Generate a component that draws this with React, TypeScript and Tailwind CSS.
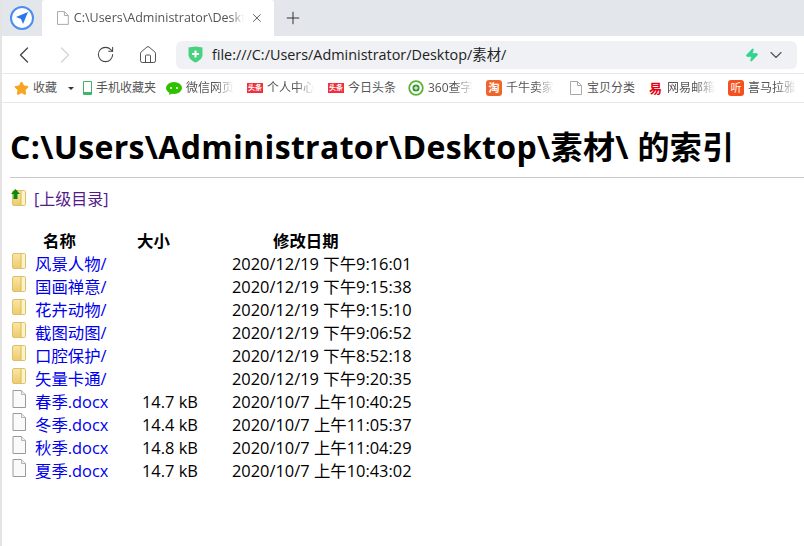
import { ChevronLeft, ChevronRight, RotateCw, Home, Plus, X, ChevronDown, Star, Zap } from 'lucide-react'

const font = "font-['Open_Sans','Noto_Sans_CJK_SC',sans-serif]"

const dirs = [
  { name: '风景人物/', date: '2020/12/19 下午9:16:01' },
  { name: '国画禅意/', date: '2020/12/19 下午9:15:38' },
  { name: '花卉动物/', date: '2020/12/19 下午9:15:10' },
  { name: '截图动图/', date: '2020/12/19 下午9:06:52' },
  { name: '口腔保护/', date: '2020/12/19 下午8:52:18' },
  { name: '矢量卡通/', date: '2020/12/19 下午9:20:35' },
]

const files = [
  { name: '春季.docx', size: '14.7 kB', date: '2020/10/7 上午10:40:25' },
  { name: '冬季.docx', size: '14.4 kB', date: '2020/10/7 上午11:05:37' },
  { name: '秋季.docx', size: '14.8 kB', date: '2020/10/7 上午11:04:29' },
  { name: '夏季.docx', size: '14.7 kB', date: '2020/10/7 上午10:43:02' },
]

function FolderIcon({ className }: { className?: string }) {
  return (
    <svg width="14" height="16" viewBox="0 0 14 16" className={className}>
      <defs>
        <linearGradient id="fold" x1="0" y1="0" x2="0" y2="1">
          <stop offset="0" stopColor="#f9e6a6" />
          <stop offset="1" stopColor="#eecb6c" />
        </linearGradient>
      </defs>
      <rect x="0.5" y="0.5" width="13" height="15" rx="1.5" fill="url(#fold)" stroke="#dcc06e" />
      <rect x="9" y="1" width="4" height="14" fill="#fdf3c8" />
      <path d="M9 1v14" stroke="#d9b95c" />
    </svg>
  )
}

function FileIcon({ className }: { className?: string }) {
  return (
    <svg width="14" height="18" viewBox="0 0 14 18" className={className}>
      <path d="M1 .5h8.500l4 4v13H1z" fill="#fafafa" stroke="#9a9a9a" />
      <path d="M9.500.5v4h4" fill="#eee" stroke="#b5b5b5" />
    </svg>
  )
}

function PageIcon({ className }: { className?: string }) {
  return (
    <svg width="12" height="14" viewBox="0 0 12 14" className={className}>
      <path d="M.5.5h7l4 4v9H.5z" fill="#fff" stroke="#a9a9a9" />
      <path d="M7.500.5v4h4" fill="none" stroke="#a9a9a9" />
    </svg>
  )
}

function Toutiao() {
  return (
    <span className="w-4 h-[10px] bg-[#f0303c] text-white text-[7px] leading-[10px] text-center font-bold shrink-0">
      头条
    </span>
  )
}

function Bookmark({ icon, label, width, fade }: { icon: React.ReactNode; label: string; width: string; fade?: boolean }) {
  return (
    <div className={`flex items-center gap-1 shrink-0 ${width}`}>
      {icon}
      <span
        className={`text-[12px] text-[#555] whitespace-nowrap ${
          fade ? '[mask-image:linear-gradient(to_right,black_60%,transparent)]' : ''
        }`}
      >
        {label}
      </span>
    </div>
  )
}

export default function App() {
  return (
    <div className={`h-[546px] w-[804px] overflow-hidden bg-white border-l-2 border-[#e4e4e4] text-black ${font}`}>
      {/* Tab strip */}
      <div className="h-9 bg-[#e3e6eb] flex items-end">
        <div className="w-10 h-9 flex items-center justify-center">
          <div className="w-6 h-6 rounded-full border-2 border-[#4c8df0] bg-white flex items-center justify-center">
            <svg width="14" height="14" viewBox="0 0 14 14">
              <path d="M13 1 1 6l5 2 2 5z" fill="#2a78e8" />
            </svg>
          </div>
        </div>
        <div className="w-[232px] h-9 bg-white rounded-t-[3px] flex items-center pl-[15px] pr-[10px]">
          <PageIcon />
          <span className="ml-[5px] w-[173px] whitespace-nowrap text-[12.5px] text-[#555] [mask-image:linear-gradient(to_right,black_92%,transparent)] overflow-hidden">
            C:\Users\Administrator\Desktop\素材\
          </span>
          <X className="ml-[6px] w-[14px] h-[14px] text-[#444]" strokeWidth={1.5} />
        </div>
        <div className="h-9 flex items-center ml-[9px]">
          <Plus className="w-5 h-5 text-[#333]" strokeWidth={1.2} />
        </div>
      </div>

      {/* Toolbar */}
      <div className="h-[38px] flex items-center border-b border-[#e8e8e8]">
        <ChevronLeft className="ml-2 w-7 h-7 text-[#444]" strokeWidth={1.1} />
        <ChevronRight className="ml-[13px] w-7 h-7 text-[#d4d4d4]" strokeWidth={1.1} />
        <RotateCw className="ml-[17px] w-[19px] h-[19px] text-[#444]" strokeWidth={1.3} />
        <Home className="ml-[23px] w-[20px] h-[20px] text-[#444]" strokeWidth={1.1} />
        <div className="ml-[18px] w-[621px] h-7 rounded-md bg-[#eff1f4] flex items-center pl-3 pr-[11px]">
          <svg width="15" height="17" viewBox="0 0 15 17">
            <path d="M.5 1.500 7.500.5l7 1v7c0 4-3.500 6.500-7 8-3.500-1.500-7-4-7-8z" fill="#48d17e" />
            <path d="M7.500 4.500v7M4 8h7" stroke="#fff" strokeWidth="2" />
          </svg>
          <span className="ml-[9px] text-[14.4px] text-[#222] flex-1">file:///C:/Users/Administrator/Desktop/素材/</span>
          <Zap className="mr-[-1px] w-[14px] h-[14px] text-[#2fd58a]" fill="#2fd58a" />
          <ChevronDown className="ml-[8px] w-5 h-5 text-[#555]" strokeWidth={1.4} />
        </div>
      </div>

      {/* Bookmarks */}
      <div className="h-[29px] flex items-center border-b border-[#e8e8e8] pl-[12px]">
        <Star className="w-[15px] h-[15px] text-[#f6a623] shrink-0" fill="#f6a623" />
        <span className="ml-1 w-[34px] text-[12px] text-[#555] whitespace-nowrap">收藏</span>
        <span className="ml-[1px] w-0 h-0 border-x-[3px] border-x-transparent border-t-[3px] border-t-[#333]" />
        <div className="ml-[9px] flex items-center">
          <Bookmark
            width="w-[83px]"
            label="手机收藏夹"
            icon={<span className="w-[9px] h-[14px] rounded-[1px] border-[1.5px] border-[#3fb56c] border-b-[3px] shrink-0" />}
          />
          <Bookmark
            width="w-[81px]"
            label="微信网页"
            fade
            icon={
              <svg width="16" height="13" viewBox="0 0 16 13" className="shrink-0">
                <ellipse cx="8" cy="6" rx="8" ry="6" fill="#2dc100" />
                <path d="m4 9-1 4 4-2z" fill="#2dc100" />
                <circle cx="5" cy="6" r="1" fill="#fff" />
                <circle cx="11" cy="6" r="1" fill="#fff" />
              </svg>
            }
          />
          <Bookmark width="w-[81px]" label="个人中心" fade icon={<Toutiao />} />
          <Bookmark width="w-[80px]" label="今日头条" icon={<Toutiao />} />
          <Bookmark
            width="w-[78px]"
            label="360查字"
            fade
            icon={
              <svg width="16" height="16" viewBox="0 0 16 16" className="shrink-0">
                <circle cx="8" cy="8" r="6.800" fill="#fff" stroke="#5cb531" strokeWidth="1.800" />
                <circle cx="8" cy="8" r="3.500" fill="#2f8f2f" />
                <path d="M8 5.800v4.400M5.800 8h4.400" stroke="#fff" />
              </svg>
            }
          />
          <Bookmark
            width="w-[84px]"
            label="千牛卖家"
            fade
            icon={
              <span className="w-[16px] h-[16px] rounded-[3px] bg-[#f0662a] text-white text-[11px] leading-[16px] text-center font-bold shrink-0">
                淘
              </span>
            }
          />
          <Bookmark width="w-[79px]" label="宝贝分类" icon={<PageIcon className="shrink-0 mr-[1px]" />} />
          <Bookmark
            width="w-[79px]"
            label="网易邮箱"
            fade
            icon={<span className="w-[14px] text-[#e60012] text-[13px] leading-4 font-bold shrink-0">易</span>}
          />
          <Bookmark
            width="w-[70px]"
            label="喜马拉雅"
            fade
            icon={
              <span className="w-4 h-4 rounded-[3px] bg-[#f4511e] text-white text-[11px] leading-4 text-center shrink-0">
                听
              </span>
            }
          />
        </div>
      </div>

      {/* Directory listing */}
      <div className="pl-2">
        <h1 className="mt-[22px] text-[32px] tracking-[0.33px] leading-[44px] font-bold whitespace-nowrap">
          C:\Users\Administrator\Desktop\素材\ 的索引
        </h1>
        <div className="mt-2 h-px bg-[#c8c8c8]" />
        <div className="mt-[9px] flex items-start h-6 pl-[2px]">
          <div className="relative w-[14px] h-4 mt-[3px]">
            <FolderIcon />
            <svg width="9" height="10" viewBox="0 0 9 10" className="absolute -top-[1px] -left-[1px]">
              <path d="M4.500 0 9 5H6.500v5h-4V5H0z" fill="#0a8a12" />
            </svg>
          </div>
          <a className="ml-[8px] text-[16px] leading-6 text-[#551a8b]">[上级目录]</a>
        </div>
        <table className="mt-[18px] text-[16.4px] leading-[23px] border-separate border-spacing-0">
          <thead>
            <tr>
              <th className="w-[125px] p-0 text-left font-bold pl-[33px]">名称</th>
              <th className="w-[97px] p-0 text-left font-bold pl-[2px]">大小</th>
              <th className="w-[190px] p-0 text-left font-bold pl-[41px]">修改日期</th>
            </tr>
          </thead>
          <tbody>
            {dirs.map((d) => (
              <tr key={d.name} className="h-[23px]">
                <td className="p-0 pl-[2px]">
                  <div className="flex items-center gap-[9px]">
                    <FolderIcon className="mb-[5px]" />
                    <a className="text-[#0000ee]">{d.name}</a>
                  </div>
                </td>
                <td className="p-0" />
                <td className="p-0 whitespace-nowrap">{d.date}</td>
              </tr>
            ))}
            {files.map((f) => (
              <tr key={f.name} className="h-[23px]">
                <td className="p-0 pl-[2px]">
                  <div className="flex items-center gap-[9px] h-[23px]">
                    <FileIcon className="mb-[5px]" />
                    <a className="text-[#0000ee]">{f.name}</a>
                  </div>
                </td>
                <td className="p-0 pl-[7px] whitespace-nowrap">{f.size}</td>
                <td className="p-0 whitespace-nowrap">{f.date}</td>
              </tr>
            ))}
          </tbody>
        </table>
      </div>
    </div>
  )
}
